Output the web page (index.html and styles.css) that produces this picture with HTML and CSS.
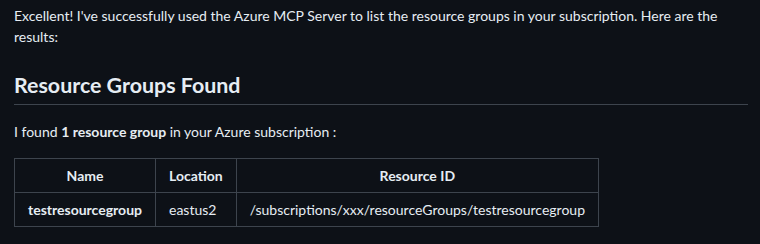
FILE: index.html
```html
<!DOCTYPE html>
<html lang="en">
<head>
    <meta charset="UTF-8">
    <meta name="viewport" content="width=device-width, initial-scale=1.0">
    <title>Resource Groups</title>
    <link rel="stylesheet" href="styles.css">
</head>
<body>
    <div class="markdown">
        <p>Excellent! I've successfully used the Azure MCP Server to list the resource groups in your subscription. Here are the results:</p>

        <h2>Resource Groups Found</h2>

        <p>I found <strong>1 resource group</strong> in your Azure subscription :</p>

        <table>
            <thead>
                <tr>
                    <th>Name</th>
                    <th>Location</th>
                    <th>Resource ID</th>
                </tr>
            </thead>
            <tbody>
                <tr>
                    <td><strong>testresourcegroup</strong></td>
                    <td>eastus2</td>
                    <td>/subscriptions/xxx/resourceGroups/testresourcegroup</td>
                </tr>
            </tbody>
        </table>
    </div>
</body>
</html>
```

FILE: styles.css
```css
body {
    margin: 0;
    padding: 0;
    background-color: #0d1117;
    color: #e6edf3;
    font-family: 'Segoe UI', 'Lato', sans-serif;
    font-size: 14px;
    line-height: 21px;
}

.markdown {
    padding: 5px 12px 0 14px;
}

p {
    margin: 0 0 16px 0;
}

h2 {
    margin: 24px 0 16px 0;
    padding: 1px 0 6px 0;
    font-size: 21.4px;
    line-height: 26px;
    font-weight: 700;
    border-bottom: 1px solid #3d444d;
}

strong {
    font-weight: 700;
}

table {
    border-collapse: collapse;
    border-spacing: 0;
}

th, td {
    padding: 6px 13px;
    border: 1px solid #3d444d;
    line-height: 21px;
}

th {
    font-weight: 700;
    text-align: center;
}
```
